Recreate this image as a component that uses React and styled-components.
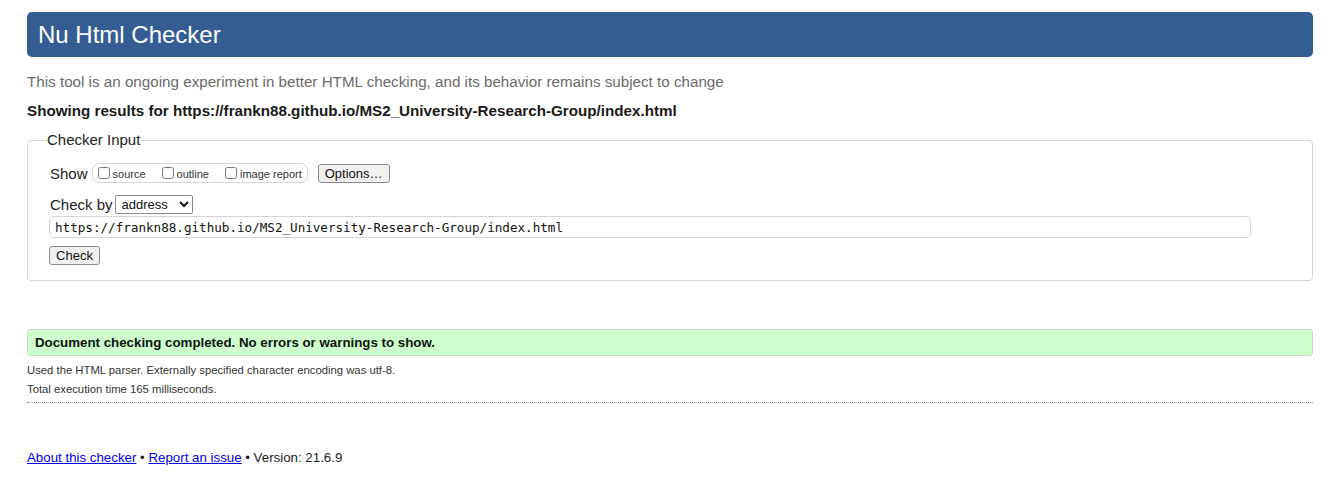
import React from 'react';
import styled, { createGlobalStyle } from 'styled-components';

const Global = createGlobalStyle`
 body{
     margin: 0;
     background: #fff;
     color: #222;
     font-family: "Liberation Sans", Arial, sans-serif;
 }
`

function App() {
    return (
        <Page>
            <Global />
            <Title>Nu Html Checker</Title>
            <Intro>This tool is an ongoing experiment in better HTML checking, and its behavior remains subject to change</Intro>
            <Results>Showing results for https://frankn88.github.io/MS2_University-Research-Group/index.html</Results>

            <Form>
                <Legend>Checker Input</Legend>
                <Row>
                    <Label>Show</Label>
                    <Options>
                        <Opt><input type="checkbox" />source</Opt>
                        <Opt><input type="checkbox" />outline</Opt>
                        <Opt><input type="checkbox" />image report</Opt>
                    </Options>
                    <Button>Options…</Button>
                </Row>
                <Row gap="2px" top="11px">
                    <Label>Check by</Label>
                    <Select defaultValue="address">
                        <option value="address">address</option>
                        <option value="file">file upload</option>
                        <option value="text">text input</option>
                    </Select>
                </Row>
                <Address defaultValue="https://frankn88.github.io/MS2_University-Research-Group/index.html" />
                <Button submit>Check</Button>
            </Form>

            <Success>Document checking completed. No errors or warnings to show.</Success>
            <Details>
                <p>Used the HTML parser. Externally specified character encoding was utf-8.</p>
                <p>Total execution time 165 milliseconds.</p>
            </Details>

            <Footer>
                <a href="#about">About this checker</a> • <a href="#issue">Report an issue</a> • Version: 21.6.9
            </Footer>
        </Page>
    )
}

const Page = styled.div`
 padding: 12px 24px 20px 27px;
`

const Title = styled.h1`
 margin: 0;
 height: 45px;
 display: flex;
 align-items: center;
 padding-left: 11px;
 background-color: #345e93;
 color: #fff;
 font-size: 24px;
 font-weight: 400;
 border-radius: 5px;
`

const Intro = styled.p`
 margin: 16px 0 0;
 font-size: 15.2px;
 line-height: 18px;
 color: #6b6b6b;
`

const Results = styled.p`
 margin: 11px 0 0;
 font-size: 15.2px;
 line-height: 18px;
 font-weight: 700;
 color: #1a1a1a;
`

const Form = styled.fieldset`
 margin: 11px 0 0;
 padding: 14px 21px 15px 21px;
 border: 1px solid #d4d4d4;
 border-radius: 4px;
`

const Legend = styled.legend`
 margin-left: -3px;
 padding: 0 1px;
 font-size: 15px;
 line-height: 18px;
 color: #222;
`

const Row = styled.div`
 display: flex;
 align-items: center;
 gap: ${p => p.gap || '0'};
 margin-top: ${p => p.top || '0'};
 height: 20px;
`

const Label = styled.span`
 font-size: 15px;
 margin-left: 1px;
`

const Options = styled.div`
 display: flex;
 align-items: center;
 margin-left: 4px;
 height: 18px;
 padding: 0 5px 0 5px;
 border: 1px solid #d6d6d6;
 border-radius: 7px;
`

const Opt = styled.label`
 display: flex;
 align-items: center;
 font-size: 11px;
 color: #333;
 margin-right: 16px;
 padding-top: 2px;

 &:last-child{
     margin-right: 0;
 }

 input{
     width: 12px;
     height: 12px;
     margin: 0 3px 2px 0;
 }
`

const Button = styled.button`
 height: 19px;
 margin-left: ${p => p.submit ? '0' : '10px'};
 margin-top: ${p => p.submit ? '8px' : '0'};
 padding: 0 6px;
 min-width: ${p => p.submit ? '51px' : '71px'};
 background: #f0f0f0;
 border: 1px solid #8a8a8a;
 border-radius: 3px;
 font-family: "Liberation Sans", Arial, sans-serif;
 font-size: 13px;
 color: #111;
 display: block;
`

const Select = styled.select`
 width: 78px;
 height: 19px;
 padding: 0 2px;
 border: 1px solid #8a8a8a;
 border-radius: 2px;
 background: #fff;
 font-family: "Liberation Sans", Arial, sans-serif;
 font-size: 13px;
 color: #111;
`

const Address = styled.input`
 display: block;
 box-sizing: border-box;
 width: 1202px;
 height: 22px;
 margin-top: 2px;
 padding: 0 5px;
 border: 1px solid #d4d4d4;
 border-radius: 5px;
 font-family: "DejaVu Sans Mono", "Liberation Mono", monospace;
 font-size: 12.6px;
 color: #111;
`

const Success = styled.div`
 margin-top: 48px;
 height: 27px;
 box-sizing: border-box;
 display: flex;
 align-items: center;
 padding-left: 7px;
 background-color: #ccffcc;
 border: 1px solid #c8dcc8;
 border-radius: 3px;
 font-size: 13.3px;
 font-weight: 700;
 color: #111;
`

const Details = styled.div`
 margin-top: 5px;
 padding-bottom: 3px;
 border-bottom: 1px dotted #8a8a8a;

 p{
     margin: 0;
     font-size: 11.3px;
     line-height: 19px;
     color: #333;
 }
`

const Footer = styled.p`
 margin: 47px 0 0;
 font-size: 13.3px;
 line-height: 16px;
 color: #222;

 a{
     color: #0000ee;
 }
`

export default App
